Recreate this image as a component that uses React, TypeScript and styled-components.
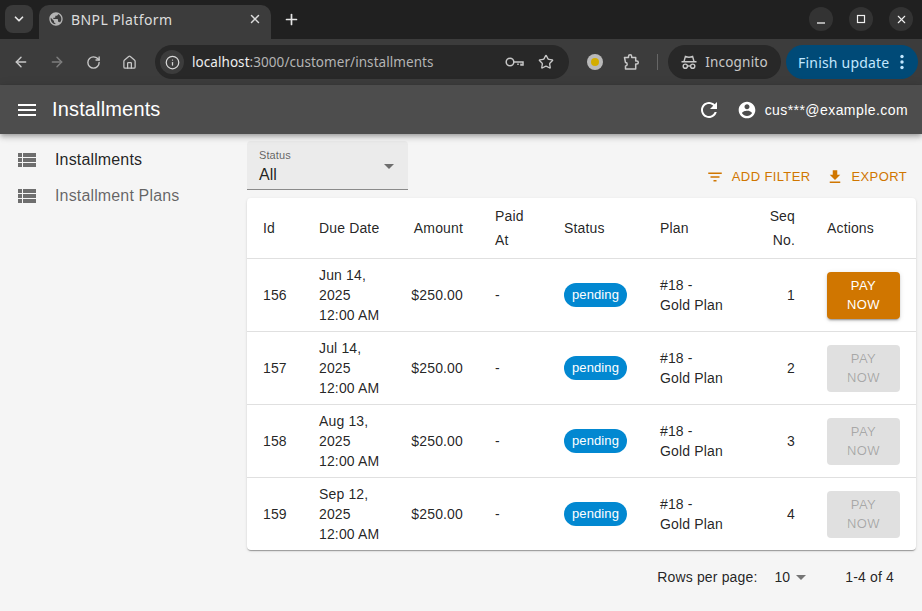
import React from 'react';
import styled, { createGlobalStyle } from 'styled-components';
import { ArrowLeft, ArrowRight, ChevronDown, Home, Info, Plus, RotateCw, Star, X } from 'lucide-react';

const GlobalStyle = createGlobalStyle`
  html, body {
    margin: 0;
    padding: 0;
    height: 100%;
    background: #f5f5f5;
    overflow: hidden;
  }
  body {
    font-family: "Liberation Sans", Arial, sans-serif;
    color: rgba(0, 0, 0, 0.87);
  }
`;

const chromeFont = '"Noto Sans", "Open Sans", sans-serif';

const Page = styled.div`
  width: 922px;
  height: 611px;
  display: flex;
  flex-direction: column;
  overflow: hidden;
`;

/* browser chrome */
const TabStrip = styled.div`
  height: 39px;
  background: #202020;
  display: flex;
  align-items: flex-end;
  padding-left: 5px;
  box-sizing: border-box;
  font-family: ${chromeFont};
  flex-shrink: 0;
`;

const TabSearch = styled.div`
  width: 28px;
  height: 28px;
  margin: 0 6px 6px 0;
  border-radius: 8px;
  background: #3a3a3a;
  color: #e6e6e6;
  display: flex;
  align-items: center;
  justify-content: center;
`;

const Tab = styled.div`
  width: 232px;
  height: 34px;
  background: #3c3c3c;
  border-radius: 10px 10px 0 0;
  display: flex;
  align-items: center;
  padding: 0 9px 6px 9px;
  box-sizing: border-box;
  color: #dcdcdc;
  font-size: 14px;
  letter-spacing: 0.4px;
  gap: 7px;
`;

const TabTitle = styled.span`
  flex: 1;
`;

const NewTab = styled.div`
  width: 28px;
  height: 28px;
  margin: 0 0 6px 6px;
  color: #e6e6e6;
  display: flex;
  align-items: center;
  justify-content: center;
`;

const WindowButtons = styled.div`
  margin-left: auto;
  margin-bottom: 8px;
  padding-right: 9px;
  display: flex;
  gap: 16px;
`;

const WindowButton = styled.div`
  width: 24px;
  height: 24px;
  border-radius: 50%;
  background: #333333;
  color: #f0f0f0;
  display: flex;
  align-items: center;
  justify-content: center;
`;

const Toolbar = styled.div`
  height: 46px;
  background: #3c3c3c;
  display: flex;
  align-items: center;
  padding: 0 4px 0 12px;
  box-sizing: border-box;
  color: #c8c8c8;
  font-family: ${chromeFont};
  flex-shrink: 0;
`;

const NavIcon = styled.div<{ $dim?: boolean }>`
  width: 18px;
  height: 18px;
  margin-right: 18px;
  color: ${(p) => (p.$dim ? '#7d7d7d' : '#c8c8c8')};
  display: flex;
  align-items: center;
  justify-content: center;
`;

const AddressBar = styled.div`
  width: 414px;
  height: 34px;
  margin-left: -1px;
  border-radius: 17px;
  background: #282828;
  display: flex;
  align-items: center;
  padding: 0 15px 0 5px;
  box-sizing: border-box;
  font-size: 13.5px;
  letter-spacing: 0.06px;
  flex-shrink: 0;
`;

const InfoBadge = styled.div`
  width: 24px;
  height: 24px;
  border-radius: 50%;
  background: #3c3c3c;
  color: #d8d8d8;
  display: flex;
  align-items: center;
  justify-content: center;
  margin-right: 8px;
`;

const UrlHost = styled.span`
  color: #eeeeee;
`;

const UrlPath = styled.span`
  color: #b4b4b4;
  flex: 1;
`;

const AddressIcons = styled.div`
  display: flex;
  align-items: center;
  gap: 14px;
  color: #c8c8c8;
`;

const ProfileDot = styled.div`
  width: 16px;
  height: 16px;
  margin: 0 20px 0 18px;
  border-radius: 50%;
  background: #b9b9b9;
  display: flex;
  align-items: center;
  justify-content: center;

  &::after {
    content: '';
    width: 8px;
    height: 8px;
    border-radius: 50%;
    background: #d3ad00;
  }
`;

const Divider = styled.div`
  width: 1px;
  height: 16px;
  margin: 0 10px 0 17px;
  background: #666666;
`;

const IncognitoPill = styled.div`
  width: 113px;
  height: 34px;
  border-radius: 17px;
  background: #282828;
  color: #c8c8c8;
  display: flex;
  align-items: center;
  justify-content: center;
  gap: 8px;
  font-size: 13.5px;
  letter-spacing: 0.2px;
  flex-shrink: 0;
`;

const UpdatePill = styled.div`
  width: 132px;
  height: 34px;
  margin-left: 5px;
  border-radius: 17px;
  background: #004a77;
  color: #c2e7ff;
  display: flex;
  align-items: center;
  padding-left: 12px;
  box-sizing: border-box;
  gap: 11px;
  font-size: 14px;
  letter-spacing: 0.2px;
  flex-shrink: 0;
`;

/* app */
const AppBar = styled.header`
  height: 49px;
  background: #4d4d4d;
  color: #ffffff;
  display: flex;
  align-items: center;
  padding: 0 14px 0 18px;
  box-sizing: border-box;
  box-shadow: 0 2px 4px -1px rgba(0, 0, 0, 0.2), 0 4px 5px 0 rgba(0, 0, 0, 0.14), 0 1px 10px 0 rgba(0, 0, 0, 0.12);
  position: relative;
  z-index: 2;
  flex-shrink: 0;
`;

const AppTitle = styled.h1`
  margin: 0 0 0 16px;
  font-size: 20px;
  font-weight: 400;
  letter-spacing: 0.15px;
  flex: 1;
`;

const UserIcon = styled.svg`
  width: 20px;
  height: 20px;
  fill: #ffffff;
  margin-left: 16px;
`;

const UserMail = styled.span`
  font-size: 14px;
  letter-spacing: 0.43px;
  margin-left: 8px;
`;

const Body = styled.div`
  flex: 1;
  display: flex;
  min-height: 0;
`;

const Sidebar = styled.nav`
  width: 247px;
  padding-top: 8px;
  box-sizing: border-box;
  flex-shrink: 0;
`;

const MenuItem = styled.div<{ $active?: boolean }>`
  height: 36px;
  display: flex;
  align-items: center;
  padding-left: 15px;
  gap: 16px;
  font-size: 16px;
  letter-spacing: 0.15px;
  color: ${(p) => (p.$active ? 'rgba(0,0,0,0.87)' : 'rgba(0,0,0,0.6)')};
`;

const MenuIcon = styled.svg`
  width: 24px;
  height: 24px;
  fill: #6e6e6e;
  flex-shrink: 0;
`;

const Content = styled.main`
  width: 669px;
  padding-top: 7px;
  display: flex;
  flex-direction: column;
`;

const TopRow = styled.div`
  height: 57px;
  display: flex;
  align-items: flex-start;
  justify-content: space-between;
`;

const SelectField = styled.div`
  width: 161px;
  height: 49px;
  background: #ebebeb;
  border-radius: 4px 4px 0 0;
  border-bottom: 1px solid #8a8a8a;
  box-sizing: border-box;
  padding: 8px 12px 0;
  position: relative;
`;

const SelectLabel = styled.div`
  font-size: 11px;
  line-height: 13px;
  letter-spacing: 0.1px;
  color: rgba(0, 0, 0, 0.6);
`;

const SelectValue = styled.div`
  font-size: 16px;
  line-height: 19px;
  margin-top: 3px;
`;

const SelectCaret = styled.span`
  position: absolute;
  right: 14px;
  top: 23px;
  border-left: 5px solid transparent;
  border-right: 5px solid transparent;
  border-top: 5px solid #6e6e6e;
`;

const Actions = styled.div`
  display: flex;
  align-items: center;
  gap: 15px;
  padding: 27px 9px 0 0;
`;

const TextAction = styled.div`
  display: flex;
  align-items: center;
  gap: 8px;
  color: #d07600;
  font-size: 13px;
  letter-spacing: 0.38px;
  line-height: 18px;
`;

const Card = styled.div`
  background: #ffffff;
  border-radius: 4px;
  overflow: hidden;
  box-shadow: 0 2px 1px -1px rgba(0, 0, 0, 0.2), 0 1px 1px 0 rgba(0, 0, 0, 0.14), 0 1px 3px 0 rgba(0, 0, 0, 0.12);
`;

const Table = styled.table`
  width: 669px;
  table-layout: fixed;
  border-collapse: collapse;
  font-size: 14px;
  line-height: 20px;
  letter-spacing: 0.15px;
`;

const HeadCell = styled.th<{ $right?: boolean; $nowrap?: boolean }>`
  height: 60px;
  padding: 0 16px;
  box-sizing: border-box;
  font-weight: 400;
  line-height: 24px;
  text-align: ${(p) => (p.$right ? 'right' : 'left')};
  white-space: ${(p) => (p.$nowrap ? 'nowrap' : 'normal')};
  border-bottom: 1px solid #e0e0e0;
`;

const Row = styled.tr`
  &:not(:last-child) td {
    border-bottom: 1px solid #e0e0e0;
  }
`;

const Cell = styled.td<{ $right?: boolean; $nowrap?: boolean }>`
  height: 73px;
  padding: 0 16px;
  box-sizing: border-box;
  text-align: ${(p) => (p.$right ? 'right' : 'left')};
  white-space: ${(p) => (p.$nowrap ? 'nowrap' : 'normal')};
`;

const Chip = styled.span`
  display: inline-flex;
  align-items: center;
  height: 24px;
  padding: 0 8px;
  border-radius: 12px;
  background: #0288d1;
  color: #ffffff;
  font-size: 13px;
  letter-spacing: 0.1px;
`;

const PayButton = styled.button<{ $disabled?: boolean }>`
  display: block;
  width: 73px;
  height: 47px;
  margin-top: 1px;
  padding: 0;
  border: 0;
  border-radius: 4px;
  font-family: inherit;
  font-size: 13px;
  line-height: 19px;
  letter-spacing: 0.4px;
  background: ${(p) => (p.$disabled ? '#e0e0e0' : '#d07600')};
  color: ${(p) => (p.$disabled ? 'rgba(0,0,0,0.26)' : '#ffffff')};
  box-shadow: ${(p) =>
    p.$disabled
      ? 'none'
      : '0 3px 1px -2px rgba(0,0,0,0.2), 0 2px 2px 0 rgba(0,0,0,0.14), 0 1px 5px 0 rgba(0,0,0,0.12)'};
`;

const Pagination = styled.div`
  height: 52px;
  margin-top: 1px;
  display: flex;
  align-items: center;
  justify-content: flex-end;
  padding-right: 22px;
  font-size: 14px;
  letter-spacing: 0.15px;
`;

const PageSelect = styled.div`
  display: flex;
  align-items: center;
  margin: 0 39px 0 17px;
  gap: 6px;
`;

const PageCaret = styled.span`
  border-left: 5px solid transparent;
  border-right: 5px solid transparent;
  border-top: 5px solid #757575;
`;

const ListGlyph = () => (
  <MenuIcon viewBox="0 0 24 24">
    <path d="M3 14h4v-4H3v4zm0 5h4v-4H3v4zM3 9h4V5H3v4zm5 5h13v-4H8v4zm0 5h13v-4H8v4zM8 5v4h13V5H8z" />
  </MenuIcon>
);

const rows = [
  { id: 156, date: 'Jun 14,', seq: 1, payable: true },
  { id: 157, date: 'Jul 14,', seq: 2, payable: false },
  { id: 158, date: 'Aug 13,', seq: 3, payable: false },
  { id: 159, date: 'Sep 12,', seq: 4, payable: false },
];

const colWidths = [56, 92, 84, 69, 96, 95, 72, 105];

export default function App() {
  return (
    <Page>
      <GlobalStyle />
      <TabStrip>
        <TabSearch>
          <ChevronDown size={14} strokeWidth={3} />
        </TabSearch>
        <Tab>
          <svg width="16" height="16" viewBox="0 0 24 24" fill="#b4b4b4">
            <path d="M12 2C6.48 2 2 6.48 2 12s4.48 10 10 10 10-4.48 10-10S17.52 2 12 2zm-1 17.93c-3.95-.49-7-3.85-7-7.93 0-.62.08-1.21.21-1.79L9 15v1c0 1.1.9 2 2 2v1.93zm6.9-2.54c-.26-.81-1-1.39-1.9-1.39h-1v-3c0-.55-.45-1-1-1H8v-2h2c.55 0 1-.45 1-1V7h2c1.1 0 2-.9 2-2v-.41c2.93 1.19 5 4.06 5 7.41 0 2.08-.8 3.97-2.1 5.39z" />
          </svg>
          <TabTitle>BNPL Platform</TabTitle>
          <X size={14} strokeWidth={2.5} />
        </Tab>
        <NewTab>
          <Plus size={17} strokeWidth={2.4} />
        </NewTab>
        <WindowButtons>
          <WindowButton>
            <svg width="10" height="10" viewBox="0 0 10 10" fill="none" stroke="currentColor" strokeWidth="1.3">
              <path d="M1 9h8" />
            </svg>
          </WindowButton>
          <WindowButton>
            <svg width="10" height="10" viewBox="0 0 10 10" fill="none" stroke="currentColor" strokeWidth="1.2">
              <rect x="1.5" y="1.5" width="7" height="7" />
            </svg>
          </WindowButton>
          <WindowButton>
            <X size={13} strokeWidth={2} />
          </WindowButton>
        </WindowButtons>
      </TabStrip>

      <Toolbar>
        <NavIcon>
          <ArrowLeft size={16} strokeWidth={2.2} />
        </NavIcon>
        <NavIcon $dim>
          <ArrowRight size={16} strokeWidth={2.2} />
        </NavIcon>
        <NavIcon>
          <RotateCw size={15} strokeWidth={2.2} />
        </NavIcon>
        <NavIcon>
          <Home size={15} strokeWidth={2} />
        </NavIcon>
        <AddressBar>
          <InfoBadge>
            <Info size={15} strokeWidth={2} />
          </InfoBadge>
          <UrlHost>localhost</UrlHost>
          <UrlPath>:3000/customer/installments</UrlPath>
          <AddressIcons>
            <svg width="19" height="12" viewBox="0 0 19 12" fill="none" stroke="currentColor" strokeWidth="1.5">
              <circle cx="5" cy="6" r="3.8" />
              <path d="M9 6h9v3h-2V7.5M13 7.5V9" />
            </svg>
            <Star size={16} strokeWidth={2} />
          </AddressIcons>
        </AddressBar>
        <ProfileDot />
        <svg width="17" height="17" viewBox="0 0 17 17" fill="none" stroke="currentColor" strokeWidth="1.5" strokeLinejoin="round">
          <path d="M1.5 3.5h4V2.4a1.6 1.6 0 0 1 3.2 0v1.1h4v3.6h1.1a1.5 1.5 0 0 1 0 3h-1.1v5H2.5V12a1.6 1.6 0 0 0 0-3.4L1.5 3.5z" />
        </svg>
        <Divider />
        <IncognitoPill>
          <svg width="16" height="16" viewBox="0 0 16 16" fill="none" stroke="currentColor" strokeWidth="1.4">
            <path d="M.5 7.7h15M3 7.5 4.4 2.4c1.2.5 2.2.8 3.6.8s2.4-.3 3.6-.8L13 7.5" />
            <circle cx="4.3" cy="12.2" r="2.1" />
            <circle cx="11.7" cy="12.2" r="2.1" />
            <path d="M6.4 12h3.2" />
          </svg>
          Incognito
        </IncognitoPill>
        <UpdatePill>
          Finish update
          <svg width="4" height="16" viewBox="0 0 4 16" fill="currentColor">
            <circle cx="2" cy="2.5" r="1.7" />
            <circle cx="2" cy="8" r="1.7" />
            <circle cx="2" cy="13.5" r="1.7" />
          </svg>
        </UpdatePill>
      </Toolbar>

      <AppBar>
        <svg width="18" height="12" viewBox="0 0 18 12" fill="#fff">
          <path d="M0 12h18v-2H0v2zm0-5h18V5H0v2zm0-7v2h18V0H0z" />
        </svg>
        <AppTitle>Installments</AppTitle>
        <svg width="24" height="24" viewBox="0 0 24 24" fill="#fff">
          <path d="M17.65 6.35C16.2 4.9 14.21 4 12 4c-4.42 0-7.99 3.58-7.99 8s3.57 8 7.99 8c3.73 0 6.84-2.55 7.73-6h-2.08c-.82 2.33-3.04 4-5.65 4-3.31 0-6-2.69-6-6s2.69-6 6-6c1.66 0 3.14.69 4.22 1.78L13 11h7V4l-2.35 2.35z" />
        </svg>
        <UserIcon viewBox="0 0 24 24">
          <path d="M12 2C6.48 2 2 6.48 2 12s4.48 10 10 10 10-4.48 10-10S17.52 2 12 2zm0 3c1.66 0 3 1.34 3 3s-1.34 3-3 3-3-1.34-3-3 1.34-3 3-3zm0 14.2c-2.5 0-4.71-1.28-6-3.22.03-1.99 4-3.08 6-3.08 1.99 0 5.97 1.09 6 3.08-1.29 1.94-3.5 3.22-6 3.22z" />
        </UserIcon>
        <UserMail>cus***@example.com</UserMail>
      </AppBar>

      <Body>
        <Sidebar>
          <MenuItem $active>
            <ListGlyph />
            Installments
          </MenuItem>
          <MenuItem>
            <ListGlyph />
            Installment Plans
          </MenuItem>
        </Sidebar>
        <Content>
          <TopRow>
            <SelectField>
              <SelectLabel>Status</SelectLabel>
              <SelectValue>All</SelectValue>
              <SelectCaret />
            </SelectField>
            <Actions>
              <TextAction>
                <svg width="18" height="18" viewBox="0 0 24 24" fill="#d07600">
                  <path d="M10 18h4v-2h-4v2zM3 6v2h18V6H3zm3 7h12v-2H6v2z" />
                </svg>
                ADD FILTER
              </TextAction>
              <TextAction>
                <svg width="18" height="18" viewBox="0 0 24 24" fill="#d07600">
                  <path d="M19 9h-4V3H9v6H5l7 7 7-7zM5 18v2h14v-2H5z" />
                </svg>
                EXPORT
              </TextAction>
            </Actions>
          </TopRow>
          <Card>
            <Table>
              <colgroup>
                {colWidths.map((w, i) => (
                  <col key={i} width={w} />
                ))}
              </colgroup>
              <thead>
                <tr>
                  <HeadCell>Id</HeadCell>
                  <HeadCell $nowrap>Due Date</HeadCell>
                  <HeadCell $right>Amount</HeadCell>
                  <HeadCell>Paid At</HeadCell>
                  <HeadCell>Status</HeadCell>
                  <HeadCell>Plan</HeadCell>
                  <HeadCell $right>Seq No.</HeadCell>
                  <HeadCell>Actions</HeadCell>
                </tr>
              </thead>
              <tbody>
                {rows.map((r) => (
                  <Row key={r.id}>
                    <Cell>{r.id}</Cell>
                    <Cell $nowrap>
                      {r.date}
                      <br />
                      2025
                      <br />
                      12:00 AM
                    </Cell>
                    <Cell $right>$250.00</Cell>
                    <Cell>-</Cell>
                    <Cell>
                      <Chip>pending</Chip>
                    </Cell>
                    <Cell>
                      #18 -
                      <br />
                      Gold Plan
                    </Cell>
                    <Cell $right>{r.seq}</Cell>
                    <Cell>
                      <PayButton $disabled={!r.payable}>
                        PAY
                        <br />
                        NOW
                      </PayButton>
                    </Cell>
                  </Row>
                ))}
              </tbody>
            </Table>
          </Card>
          <Pagination>
            Rows per page:
            <PageSelect>
              10
              <PageCaret />
            </PageSelect>
            1-4 of 4
          </Pagination>
        </Content>
      </Body>
    </Page>
  );
}
